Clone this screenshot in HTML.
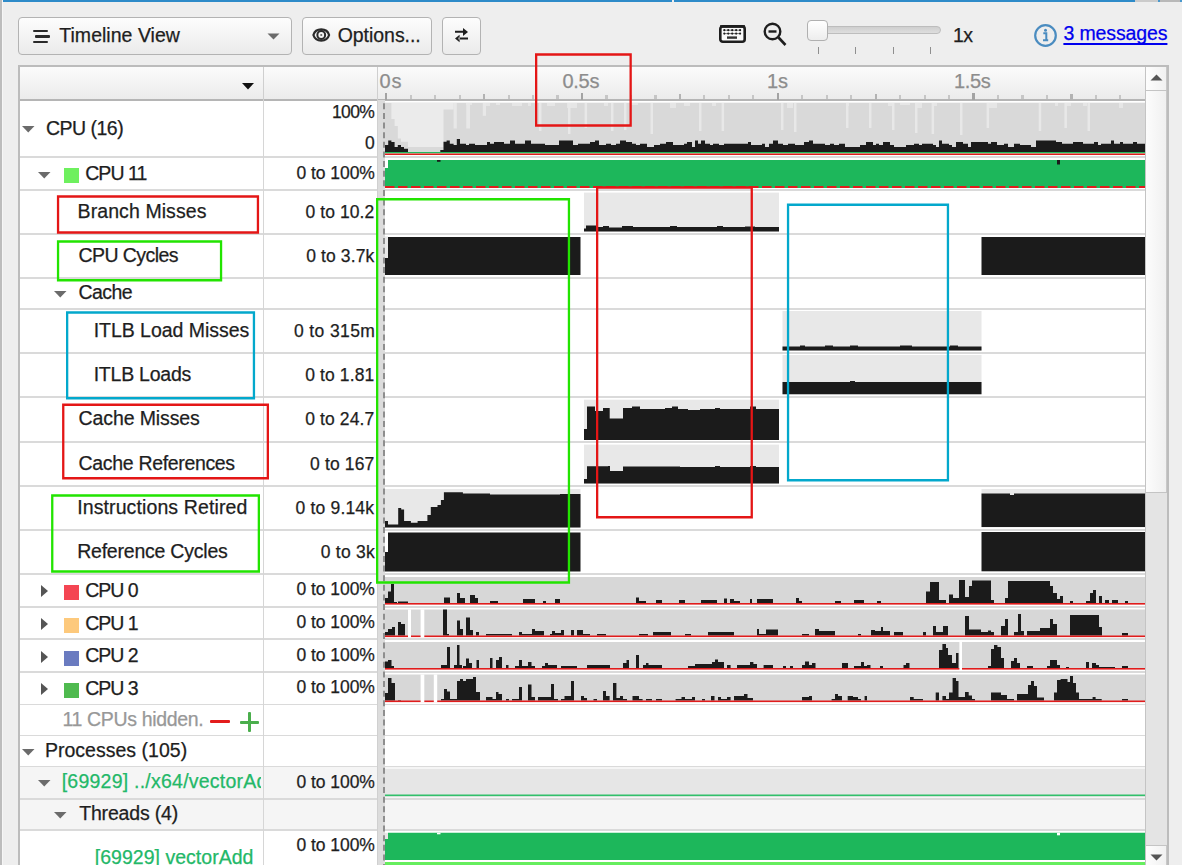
<!DOCTYPE html>
<html><head><meta charset="utf-8"><style>
html,body{margin:0;padding:0}
body{width:1182px;height:865px;overflow:hidden;position:relative;background:#eeeeee;font-family:"Liberation Sans", sans-serif}
body>div,body>span,body>svg{position:absolute}
.t{position:absolute;white-space:nowrap;font-family:"Liberation Sans", sans-serif;-webkit-text-stroke:0.25px currentColor}
svg{display:block;overflow:visible}
</style></head><body>
<div style="left:0px;top:0px;width:2px;height:865px;background:#bdbdbd;"></div>
<div style="left:2px;top:0px;width:1px;height:865px;background:#f6f6f6;"></div>
<div style="left:3px;top:0px;width:669px;height:2px;background:#2e8bc9;"></div>
<div style="left:674px;top:0px;width:461px;height:2px;background:#2e8bc9;"></div>
<div style="left:1135px;top:0px;width:23px;height:2px;background:#cbcbcb;"></div>
<div style="left:1158px;top:0px;width:2px;height:2px;background:#4a98cc;"></div>
<div style="left:1160px;top:0px;width:20px;height:2px;background:#b9b9b9;"></div>
<div style="left:1180px;top:0px;width:2px;height:2px;background:#4a98cc;"></div>
<div style="left:18px;top:17px;width:274px;height:38px;border:1px solid #b3b3b3;border-radius:4px;box-sizing:border-box;background:linear-gradient(#fdfdfd,#ebebeb);"></div>
<div style="left:302px;top:17px;width:130px;height:38px;border:1px solid #b3b3b3;border-radius:4px;box-sizing:border-box;background:linear-gradient(#fdfdfd,#ebebeb);"></div>
<div style="left:442px;top:17px;width:39px;height:38px;border:1px solid #b3b3b3;border-radius:4px;box-sizing:border-box;background:linear-gradient(#fdfdfd,#ebebeb);"></div>
<div style="left:33px;top:29.5px;width:14.5px;height:2.5px;background:#2a2a2a;border-radius:1px"></div>
<div style="left:35px;top:35px;width:14.5px;height:2.5px;background:#2a2a2a;border-radius:1px"></div>
<div style="left:33px;top:40.5px;width:14.5px;height:2.5px;background:#2a2a2a;border-radius:1px"></div>
<span class="t" style="left:59.30px;top:25.88px;font-size:19.5px;line-height:19.5px;color:#1e1e1e;letter-spacing:0.025px;">Timeline View</span>
<svg style="left:267px;top:32.8px" width="13" height="8"><path d="M0.5 0.5 L12.5 0.5 L6.5 6.5 Z" fill="#6b6b6b"/></svg>
<svg style="left:310px;top:25px" width="22" height="20" viewBox="0 0 22 20"><path d="M3.4 10 C5.6 2.6 16.9 2.6 19.1 10 C16.9 17.4 5.6 17.4 3.4 10 Z" fill="none" stroke="#2b2b2b" stroke-width="2.2"/><circle cx="11.25" cy="10" r="3.9" fill="none" stroke="#2b2b2b" stroke-width="2"/><circle cx="11.25" cy="10" r="1.1" fill="#666"/></svg>
<span class="t" style="left:337.70px;top:26.18px;font-size:19.5px;line-height:19.5px;color:#1e1e1e;letter-spacing:-0.044px;">Options...</span>
<svg style="left:0;top:0" width="1182" height="60" viewBox="0 0 1182 60"><path d="M455 30.8 H464 V32.8 H455 Z M463 28 L468 32 L463 36 Z M458.5 37.6 H468 V39.6 H458.5 Z M459.6 34.8 L455 38.6 L459.6 42.2 Z" fill="#1e1e1e"/></svg>
<svg style="left:718px;top:24px" width="29" height="20" viewBox="0 0 29 20"><rect x="2.3" y="2.4" width="24.4" height="15.3" rx="2.5" fill="#fafafa" stroke="#1e1e1e" stroke-width="2.6"/><rect x="2" y="1.2" width="25" height="2.5" fill="#1e1e1e"/><path d="M6 6.2 H22 M6 9.6 H22" stroke="#555" stroke-width="0.8"/><circle cx="6.30" cy="6.2" r="1.1" fill="#1e1e1e"/><circle cx="6.30" cy="9.6" r="1.1" fill="#1e1e1e"/><circle cx="10.25" cy="6.2" r="1.1" fill="#1e1e1e"/><circle cx="10.25" cy="9.6" r="1.1" fill="#1e1e1e"/><circle cx="14.20" cy="6.2" r="1.1" fill="#1e1e1e"/><circle cx="14.20" cy="9.6" r="1.1" fill="#1e1e1e"/><circle cx="18.15" cy="6.2" r="1.1" fill="#1e1e1e"/><circle cx="18.15" cy="9.6" r="1.1" fill="#1e1e1e"/><circle cx="22.10" cy="6.2" r="1.1" fill="#1e1e1e"/><circle cx="22.10" cy="9.6" r="1.1" fill="#1e1e1e"/><rect x="9" y="12.4" width="10" height="2.4" fill="#333"/></svg>
<svg style="left:760px;top:20px" width="30" height="30" viewBox="0 0 30 30"><circle cx="12.5" cy="11.5" r="7.8" fill="none" stroke="#1e1e1e" stroke-width="2.4"/><path d="M8.5 11.5 H16.5" stroke="#1e1e1e" stroke-width="2.4"/><path d="M18.5 17.5 L25.5 25" stroke="#1e1e1e" stroke-width="2.6"/></svg>
<div style="left:812px;top:26px;width:129px;height:8px;border:1px solid #bdbdbd;border-radius:4px;box-sizing:border-box;background:linear-gradient(#cfcfcf,#dedede)"></div>
<div style="left:807px;top:20px;width:21px;height:21px;border:1px solid #b0b0b0;border-radius:4px;box-sizing:border-box;background:linear-gradient(#ffffff,#ededed)"></div>
<div style="left:817.5px;top:47px;width:1px;height:7px;background:#8f8f8f;"></div>
<div style="left:855px;top:47px;width:1px;height:7px;background:#8f8f8f;"></div>
<div style="left:892.5px;top:47px;width:1px;height:7px;background:#8f8f8f;"></div>
<div style="left:930px;top:47px;width:1px;height:7px;background:#8f8f8f;"></div>
<span class="t" style="left:952.90px;top:25.68px;font-size:19.5px;line-height:19.5px;color:#1e1e1e;letter-spacing:-0.500px;">1x</span>
<svg style="left:1033px;top:23px" width="25" height="25" viewBox="0 0 25 25"><circle cx="12.5" cy="12.5" r="10.3" fill="none" stroke="#4a8cc0" stroke-width="2.2"/><circle cx="12.5" cy="7.3" r="1.5" fill="#4a8cc0"/><path d="M10.3 10.3 H13.3 V17 M10 17.3 H15.2" stroke="#4a8cc0" stroke-width="2" fill="none"/></svg>
<span class="t" style="left:1063.40px;top:23.98px;font-size:19.5px;line-height:19.5px;color:#0000ee;letter-spacing:-0.111px;text-decoration:underline;text-decoration-thickness:1.5px;text-underline-offset:2.5px;text-decoration-skip-ink:none;">3 messages</span>
<div style="left:18px;top:65px;width:1151px;height:820px;border:2px solid #bcbcbc;box-sizing:border-box;background:#fff"></div>
<div style="left:20px;top:67px;width:1125px;height:33px;background:linear-gradient(#fbfbfb,#ebebeb)"></div>
<div style="left:20px;top:99px;width:1125px;height:2px;background:#b5b5b5;"></div>
<div style="left:263px;top:67px;width:1px;height:33px;background:#cfcfcf;"></div>
<div style="left:377px;top:67px;width:1px;height:33px;background:#cfcfcf;"></div>
<svg style="left:242px;top:83px" width="12" height="7"><path d="M0 0 H12 L6 6.5 Z" fill="#111"/></svg>
<div style="left:20px;top:767px;width:1125px;height:63px;background:#f5f5f5;"></div>
<div style="left:20px;top:156.45px;width:1125px;height:1.5px;background:#dadada;"></div>
<div style="left:20px;top:189.15px;width:1125px;height:1.5px;background:#dadada;"></div>
<div style="left:20px;top:233.25px;width:1125px;height:1.5px;background:#dadada;"></div>
<div style="left:20px;top:277.05px;width:1125px;height:1.5px;background:#dadada;"></div>
<div style="left:20px;top:308.25px;width:1125px;height:1.5px;background:#dadada;"></div>
<div style="left:20px;top:352.05px;width:1125px;height:1.5px;background:#dadada;"></div>
<div style="left:20px;top:396.25px;width:1125px;height:1.5px;background:#dadada;"></div>
<div style="left:20px;top:441.05px;width:1125px;height:1.5px;background:#dadada;"></div>
<div style="left:20px;top:485.25px;width:1125px;height:1.5px;background:#dadada;"></div>
<div style="left:20px;top:529.05px;width:1125px;height:1.5px;background:#dadada;"></div>
<div style="left:20px;top:573.25px;width:1125px;height:1.5px;background:#dadada;"></div>
<div style="left:20px;top:606.15px;width:1125px;height:1.5px;background:#dadada;"></div>
<div style="left:20px;top:638.35px;width:1125px;height:1.5px;background:#dadada;"></div>
<div style="left:20px;top:671.15px;width:1125px;height:1.5px;background:#dadada;"></div>
<div style="left:20px;top:703.85px;width:1125px;height:1.5px;background:#dadada;"></div>
<div style="left:20px;top:734.85px;width:1125px;height:1.5px;background:#dadada;"></div>
<div style="left:20px;top:765.75px;width:1125px;height:1.5px;background:#dadada;"></div>
<div style="left:20px;top:798.15px;width:1125px;height:1.5px;background:#dadada;"></div>
<div style="left:20px;top:829.15px;width:1125px;height:1.5px;background:#dadada;"></div>
<div style="left:263px;top:100px;width:1px;height:765px;background:#d6d6d6;"></div>
<div style="left:377px;top:100px;width:1px;height:765px;background:#d0d0d0;"></div>
<div style="left:378px;top:100px;width:7px;height:765px;background:#dcdcdc;"></div>
<span class="t" style="left:379.40px;top:70.76px;font-size:20px;line-height:20px;color:#8d8d8d;letter-spacing:1.000px;">0s</span>
<span class="t" style="left:562.40px;top:70.76px;font-size:20px;line-height:20px;color:#8d8d8d;letter-spacing:-0.267px;">0.5s</span>
<span class="t" style="left:766.90px;top:70.76px;font-size:20px;line-height:20px;color:#8d8d8d;">1s</span>
<span class="t" style="left:953.90px;top:70.76px;font-size:20px;line-height:20px;color:#8d8d8d;letter-spacing:-0.333px;">1.5s</span>
<div style="left:385.2px;top:93px;width:2.2px;height:6.5px;background:#a3a3a3;"></div>
<div style="left:409.67px;top:95.2px;width:2.2px;height:4.3px;background:#c6c6c6;"></div>
<div style="left:434.14px;top:95.2px;width:2.2px;height:4.3px;background:#c6c6c6;"></div>
<div style="left:458.61px;top:95.2px;width:2.2px;height:4.3px;background:#c6c6c6;"></div>
<div style="left:483.08px;top:94px;width:2.2px;height:5.5px;background:#b3b3b3;"></div>
<div style="left:507.55px;top:95.2px;width:2.2px;height:4.3px;background:#c6c6c6;"></div>
<div style="left:532.02px;top:95.2px;width:2.2px;height:4.3px;background:#c6c6c6;"></div>
<div style="left:556.49px;top:95.2px;width:2.2px;height:4.3px;background:#c6c6c6;"></div>
<div style="left:580.96px;top:93px;width:2.2px;height:6.5px;background:#a3a3a3;"></div>
<div style="left:605.43px;top:95.2px;width:2.2px;height:4.3px;background:#c6c6c6;"></div>
<div style="left:629.9px;top:95.2px;width:2.2px;height:4.3px;background:#c6c6c6;"></div>
<div style="left:654.37px;top:95.2px;width:2.2px;height:4.3px;background:#c6c6c6;"></div>
<div style="left:678.84px;top:94px;width:2.2px;height:5.5px;background:#b3b3b3;"></div>
<div style="left:703.31px;top:95.2px;width:2.2px;height:4.3px;background:#c6c6c6;"></div>
<div style="left:727.78px;top:95.2px;width:2.2px;height:4.3px;background:#c6c6c6;"></div>
<div style="left:752.25px;top:95.2px;width:2.2px;height:4.3px;background:#c6c6c6;"></div>
<div style="left:776.72px;top:93px;width:2.2px;height:6.5px;background:#a3a3a3;"></div>
<div style="left:801.19px;top:95.2px;width:2.2px;height:4.3px;background:#c6c6c6;"></div>
<div style="left:825.66px;top:95.2px;width:2.2px;height:4.3px;background:#c6c6c6;"></div>
<div style="left:850.13px;top:95.2px;width:2.2px;height:4.3px;background:#c6c6c6;"></div>
<div style="left:874.6px;top:94px;width:2.2px;height:5.5px;background:#b3b3b3;"></div>
<div style="left:899.07px;top:95.2px;width:2.2px;height:4.3px;background:#c6c6c6;"></div>
<div style="left:923.54px;top:95.2px;width:2.2px;height:4.3px;background:#c6c6c6;"></div>
<div style="left:948.01px;top:95.2px;width:2.2px;height:4.3px;background:#c6c6c6;"></div>
<div style="left:972.48px;top:93px;width:2.2px;height:6.5px;background:#a3a3a3;"></div>
<div style="left:996.95px;top:95.2px;width:2.2px;height:4.3px;background:#c6c6c6;"></div>
<div style="left:1021.42px;top:95.2px;width:2.2px;height:4.3px;background:#c6c6c6;"></div>
<div style="left:1045.89px;top:95.2px;width:2.2px;height:4.3px;background:#c6c6c6;"></div>
<div style="left:1070.36px;top:94px;width:2.2px;height:5.5px;background:#b3b3b3;"></div>
<div style="left:1094.83px;top:95.2px;width:2.2px;height:4.3px;background:#c6c6c6;"></div>
<div style="left:1119.3px;top:95.2px;width:2.2px;height:4.3px;background:#c6c6c6;"></div>
<div style="left:1146px;top:67px;width:21px;height:800px;background:#e4e4e4;"></div>
<div style="left:1145px;top:67px;width:1px;height:800px;background:#c4c4c4;"></div>
<div style="left:1146px;top:67px;width:20px;height:23px;background:linear-gradient(90deg,#fdfdfd,#f1f1f1)"></div>
<div style="left:1166px;top:67px;width:1px;height:24px;background:#c8c8c8;"></div>
<div style="left:1146px;top:90px;width:21px;height:1px;background:#c4c4c4;"></div>
<svg style="left:1150px;top:73px" width="13" height="8"><path d="M0.5 7.5 H12.5 L6.5 1.5 Z" fill="#555"/></svg>
<div style="left:1146px;top:91px;width:20px;height:401px;background:linear-gradient(90deg,#fcfcfc,#f0f0f0)"></div>
<div style="left:1166px;top:91px;width:1px;height:401px;background:#c8c8c8;"></div>
<div style="left:1146px;top:492px;width:21px;height:1px;background:#c4c4c4;"></div>
<div style="left:1146px;top:845px;width:21px;height:1px;background:#c4c4c4;"></div>
<div style="left:1146px;top:846px;width:20px;height:19px;background:linear-gradient(90deg,#fdfdfd,#f1f1f1)"></div>
<div style="left:1166px;top:846px;width:1px;height:19px;background:#c8c8c8;"></div>
<svg style="left:1150px;top:854px" width="13" height="8"><path d="M0.5 0.5 H12.5 L6.5 6.5 Z" fill="#555"/></svg>
<svg style="left:22px;top:126px" width="13" height="7"><path d="M0 0 H12.5 L6.25 6.5 Z" fill="#6b6b6b"/></svg>
<span class="t" style="left:45.90px;top:119.18px;font-size:19.5px;line-height:19.5px;color:#1e1e1e;letter-spacing:-0.500px;">CPU (16)</span>
<svg style="left:38px;top:172px" width="13" height="7"><path d="M0 0 H12.5 L6.25 6.5 Z" fill="#6b6b6b"/></svg>
<div style="left:64px;top:168px;width:15px;height:15px;background:#6ef05e;"></div>
<span class="t" style="left:85.20px;top:164.08px;font-size:19.5px;line-height:19.5px;color:#1e1e1e;letter-spacing:-0.920px;">CPU 11</span>
<span class="t" style="left:77.60px;top:201.78px;font-size:19.5px;line-height:19.5px;color:#1e1e1e;letter-spacing:0.083px;">Branch Misses</span>
<span class="t" style="left:78.60px;top:245.78px;font-size:19.5px;line-height:19.5px;color:#1e1e1e;letter-spacing:-0.578px;">CPU Cycles</span>
<svg style="left:54px;top:291px" width="13" height="7"><path d="M0 0 H12.5 L6.25 6.5 Z" fill="#6b6b6b"/></svg>
<span class="t" style="left:78.60px;top:283.18px;font-size:19.5px;line-height:19.5px;color:#1e1e1e;letter-spacing:-0.575px;">Cache</span>
<span class="t" style="left:93.70px;top:320.78px;font-size:19.5px;line-height:19.5px;color:#1e1e1e;letter-spacing:-0.033px;">ITLB Load Misses</span>
<span class="t" style="left:93.70px;top:364.78px;font-size:19.5px;line-height:19.5px;color:#1e1e1e;letter-spacing:-0.233px;">ITLB Loads</span>
<span class="t" style="left:78.60px;top:408.78px;font-size:19.5px;line-height:19.5px;color:#1e1e1e;letter-spacing:-0.109px;">Cache Misses</span>
<span class="t" style="left:78.60px;top:453.88px;font-size:19.5px;line-height:19.5px;color:#1e1e1e;letter-spacing:-0.333px;">Cache References</span>
<span class="t" style="left:77.20px;top:498.08px;font-size:19.5px;line-height:19.5px;color:#1e1e1e;letter-spacing:0.111px;">Instructions Retired</span>
<span class="t" style="left:77.20px;top:541.58px;font-size:19.5px;line-height:19.5px;color:#1e1e1e;letter-spacing:-0.220px;">Reference Cycles</span>
<svg style="left:41px;top:585px" width="8" height="13"><path d="M0 0 V12 L7 6 Z" fill="#555"/></svg>
<div style="left:64px;top:585px;width:15px;height:15px;background:#f44553;"></div>
<span class="t" style="left:85.20px;top:581.48px;font-size:19.5px;line-height:19.5px;color:#1e1e1e;letter-spacing:-1.025px;">CPU 0</span>
<svg style="left:41px;top:618px" width="8" height="13"><path d="M0 0 V12 L7 6 Z" fill="#555"/></svg>
<div style="left:64px;top:618px;width:15px;height:15px;background:#fdc97c;"></div>
<span class="t" style="left:85.20px;top:613.58px;font-size:19.5px;line-height:19.5px;color:#1e1e1e;letter-spacing:-1.025px;">CPU 1</span>
<svg style="left:41px;top:651px" width="8" height="13"><path d="M0 0 V12 L7 6 Z" fill="#555"/></svg>
<div style="left:64px;top:651px;width:15px;height:15px;background:#6a7bc0;"></div>
<span class="t" style="left:85.20px;top:646.08px;font-size:19.5px;line-height:19.5px;color:#1e1e1e;letter-spacing:-1.025px;">CPU 2</span>
<svg style="left:41px;top:683px" width="8" height="13"><path d="M0 0 V12 L7 6 Z" fill="#555"/></svg>
<div style="left:64px;top:683px;width:15px;height:15px;background:#4fba4f;"></div>
<span class="t" style="left:85.20px;top:678.58px;font-size:19.5px;line-height:19.5px;color:#1e1e1e;letter-spacing:-1.025px;">CPU 3</span>
<span class="t" style="left:62.40px;top:709.78px;font-size:19.5px;line-height:19.5px;color:#989898;letter-spacing:-0.343px;">11 CPUs hidden.</span>
<div style="left:210px;top:720.4px;width:19.8px;height:3px;background:#e31d1d;border-radius:1px"></div>
<div style="left:239.5px;top:720.5px;width:19.6px;height:3px;background:#4aae4c;border-radius:1px"></div>
<div style="left:248.1px;top:712px;width:3px;height:20px;background:#4aae4c;border-radius:1px"></div>
<svg style="left:22px;top:749px" width="13" height="7"><path d="M0 0 H12.5 L6.25 6.5 Z" fill="#6b6b6b"/></svg>
<span class="t" style="left:44.90px;top:740.98px;font-size:19.5px;line-height:19.5px;color:#1e1e1e;letter-spacing:0.021px;">Processes (105)</span>
<svg style="left:38px;top:780px" width="13" height="7"><path d="M0 0 H12.5 L6.25 6.5 Z" fill="#6b6b6b"/></svg>
<div style="left:62px;top:767px;width:198.5px;height:32px;overflow:hidden"><span class="t" style="left:-0.30px;top:5.28px;font-size:19.5px;line-height:19.5px;color:#23b868;letter-spacing:0.233px">[69929] ../x64/vectorAdd</span></div>
<svg style="left:54px;top:812px" width="13" height="7"><path d="M0 0 H12.5 L6.25 6.5 Z" fill="#6b6b6b"/></svg>
<span class="t" style="left:79.20px;top:803.88px;font-size:19.5px;line-height:19.5px;color:#1e1e1e;letter-spacing:-0.180px;">Threads (4)</span>
<span class="t" style="left:94.70px;top:847.58px;font-size:19.5px;line-height:19.5px;color:#23b868;letter-spacing:0.031px;">[69929] vectorAdd</span>
<span class="t" style="left:332.00px;top:104.31px;font-size:17.5px;line-height:17.5px;color:#1e1e1e;letter-spacing:-0.633px;">100%</span>
<span class="t" style="left:364.90px;top:135.17px;font-size:17.5px;line-height:17.5px;color:#1e1e1e;letter-spacing:0.200px;">0</span>
<span class="t" style="left:296.60px;top:165.26px;font-size:17.5px;line-height:17.5px;color:#1e1e1e;letter-spacing:-0.062px;">0 to 100%</span>
<span class="t" style="left:305.60px;top:204.37px;font-size:17.5px;line-height:17.5px;color:#1e1e1e;letter-spacing:0.063px;">0 to 10.2</span>
<span class="t" style="left:306.30px;top:247.96px;font-size:17.5px;line-height:17.5px;color:#1e1e1e;letter-spacing:0.100px;">0 to 3.7k</span>
<span class="t" style="left:294.00px;top:322.76px;font-size:17.5px;line-height:17.5px;color:#1e1e1e;letter-spacing:0.388px;">0 to 315m</span>
<span class="t" style="left:305.30px;top:366.96px;font-size:17.5px;line-height:17.5px;color:#1e1e1e;letter-spacing:0.100px;">0 to 1.81</span>
<span class="t" style="left:305.30px;top:410.96px;font-size:17.5px;line-height:17.5px;color:#1e1e1e;letter-spacing:0.100px;">0 to 24.7</span>
<span class="t" style="left:310.10px;top:456.37px;font-size:17.5px;line-height:17.5px;color:#1e1e1e;letter-spacing:0.143px;">0 to 167</span>
<span class="t" style="left:295.60px;top:500.16px;font-size:17.5px;line-height:17.5px;color:#1e1e1e;letter-spacing:0.167px;">0 to 9.14k</span>
<span class="t" style="left:320.80px;top:543.87px;font-size:17.5px;line-height:17.5px;color:#1e1e1e;letter-spacing:0.217px;">0 to 3k</span>
<span class="t" style="left:296.60px;top:581.47px;font-size:17.5px;line-height:17.5px;color:#1e1e1e;letter-spacing:-0.062px;">0 to 100%</span>
<span class="t" style="left:296.60px;top:614.31px;font-size:17.5px;line-height:17.5px;color:#1e1e1e;letter-spacing:-0.062px;">0 to 100%</span>
<span class="t" style="left:296.60px;top:647.16px;font-size:17.5px;line-height:17.5px;color:#1e1e1e;letter-spacing:-0.062px;">0 to 100%</span>
<span class="t" style="left:296.60px;top:679.47px;font-size:17.5px;line-height:17.5px;color:#1e1e1e;letter-spacing:-0.062px;">0 to 100%</span>
<span class="t" style="left:296.60px;top:774.26px;font-size:17.5px;line-height:17.5px;color:#1e1e1e;letter-spacing:-0.062px;">0 to 100%</span>
<span class="t" style="left:296.60px;top:837.47px;font-size:17.5px;line-height:17.5px;color:#1e1e1e;letter-spacing:-0.062px;">0 to 100%</span>
<svg style="left:0;top:0;position:absolute" width="1182" height="865" viewBox="0 0 1182 865"><path d="M384 101 V865" stroke="#8a8a8a" stroke-width="1.9" stroke-dasharray="6 3.63" stroke-dashoffset="7.33"/><rect x="385" y="102.4" width="760" height="50" fill="#ebebeb"/><path d="M385 152 V103 H391.4 V119 H394.6 V126 H397.8 V138.6 H401 V141.8 H408 V147 H443.5 V109.4 H453.6 V103 H1145 V152 Z" fill="#d9d9d9"/><rect x="466" y="103" width="6" height="2" fill="#e6e6e6"/><rect x="484" y="103" width="6" height="3" fill="#e6e6e6"/><rect x="496" y="103" width="4" height="2" fill="#e6e6e6"/><rect x="512" y="103" width="10" height="3" fill="#e6e6e6"/><rect x="528" y="103" width="3" height="3" fill="#e6e6e6"/><rect x="547" y="103" width="8" height="3" fill="#e6e6e6"/><rect x="567" y="103" width="10" height="5" fill="#e6e6e6"/><rect x="604" y="103" width="4" height="3" fill="#e6e6e6"/><rect x="630" y="103" width="8" height="2" fill="#e6e6e6"/><rect x="670" y="103" width="6" height="5" fill="#e6e6e6"/><rect x="684" y="103" width="6" height="3" fill="#e6e6e6"/><rect x="712" y="103" width="4" height="3" fill="#e6e6e6"/><rect x="787" y="103" width="6" height="5" fill="#e6e6e6"/><rect x="846" y="103" width="3" height="3" fill="#e6e6e6"/><rect x="888" y="103" width="6" height="3" fill="#e6e6e6"/><rect x="900" y="103" width="10" height="2" fill="#e6e6e6"/><rect x="916" y="103" width="6" height="5" fill="#e6e6e6"/><rect x="934" y="103" width="3" height="3" fill="#e6e6e6"/><rect x="989" y="103" width="8" height="5" fill="#e6e6e6"/><rect x="1055" y="103" width="3" height="3" fill="#e6e6e6"/><rect x="1066" y="103" width="5" height="3" fill="#e6e6e6"/><rect x="1083" y="103" width="4" height="3" fill="#e6e6e6"/><rect x="1119" y="103" width="4" height="5" fill="#e6e6e6"/><rect x="453.6" y="103" width="3.2" height="25.5" fill="#e8e8e8"/><rect x="466.3" y="103" width="3.7" height="25.5" fill="#e8e8e8"/><rect x="482.8" y="103" width="3.2" height="12.799999999999997" fill="#e8e8e8"/><rect x="539" y="103" width="2.5" height="28" fill="#e8e8e8"/><rect x="568" y="103" width="2.5" height="31" fill="#e8e8e8"/><rect x="584.6" y="103" width="2.5" height="25" fill="#e8e8e8"/><rect x="611" y="103" width="2.5" height="28" fill="#e8e8e8"/><rect x="624" y="103" width="2.5" height="27" fill="#e8e8e8"/><rect x="650.5" y="103" width="2.5" height="31" fill="#e8e8e8"/><rect x="699" y="103" width="2.5" height="28" fill="#e8e8e8"/><rect x="721.6" y="103" width="2.5" height="28" fill="#e8e8e8"/><rect x="781" y="103" width="2.5" height="27" fill="#e8e8e8"/><rect x="794" y="103" width="2.5" height="29" fill="#e8e8e8"/><rect x="846" y="103" width="2.5" height="25" fill="#e8e8e8"/><rect x="869" y="103" width="2.5" height="25" fill="#e8e8e8"/><rect x="892" y="103" width="2.5" height="27" fill="#e8e8e8"/><rect x="915" y="103" width="2.5" height="30" fill="#e8e8e8"/><rect x="931.6" y="103" width="2.5" height="31" fill="#e8e8e8"/><rect x="960" y="103" width="2.5" height="32" fill="#e8e8e8"/><rect x="986.6" y="103" width="2.5" height="25" fill="#e8e8e8"/><rect x="1038.7" y="103" width="2.5" height="28" fill="#e8e8e8"/><rect x="1064.4" y="103" width="2.5" height="25" fill="#e8e8e8"/><rect x="1087.5" y="103" width="2.5" height="28" fill="#e8e8e8"/><path d="M385 152 V145 H388.2 V140.5 H391.4 V142 H394.6 V146.9 H397.8 V145 H401 V147 H404 V148.8 H408 V152 Z M440.3 152 V150 H443.5 V141.8 H446.6 V140.5 H449.8 V143.7 H453.6 V145 H456.8 V138.9 H460 V143.7 H466 V145 H469 V143.7 H475 V145 H479 V145 H484 V145 H487 V142 H490 V143.7 H494 V142 H497 V142 H504 V143.7 H510 V140.5 H515 V143.7 H522 V143.7 H525 V140.5 H531 V143.7 H538 V143.7 H545 V145 H548 V145 H551 V145 H554 V145 H559 V140.5 H566 V140.5 H573 V145 H578 V143.7 H583 V143.7 H587 V143.7 H590 V142 H595 V140.5 H599 V145 H606 V143.7 H611 V145 H616 V143.7 H620 V140.5 H626 V142 H632 V143.7 H636 V145 H640 V143.7 H647 V146.9 H654 V145 H660 V143.7 H666 V142 H673 V145 H680 V145 H684 V143.7 H687 V142 H692 V146.9 H695 V140.5 H698 V143.7 H701 V140.5 H705 V143.7 H710 V145 H713 V143.7 H719 V145 H724 V143.7 H728 V143.7 H732 V143.7 H735 V143.7 H739 V143.7 H742 V143.7 H748 V142 H751 V145 H756 V145 H762 V143.7 H765 V146.9 H769 V143.7 H773 V140.5 H778 V143.7 H783 V145 H788 V143.7 H795 V145 H798 V145 H804 V142 H809 V140.5 H813 V143.7 H817 V143.7 H821 V143.7 H825 V145 H830 V143.7 H834 V145 H839 V143.7 H845 V146.9 H848 V146.9 H853 V146.9 H860 V145 H866 V142 H873 V145 H876 V143.7 H879 V145 H883 V142 H890 V145 H894 V146.9 H900 V146.9 H903 V146.9 H906 V145 H910 V145 H914 V143.7 H919 V145 H922 V143.7 H929 V143.7 H933 V145 H936 V146.9 H939 V140.5 H942 V143.7 H949 V145 H952 V146.9 H956 V142 H963 V143.7 H968 V146.9 H971 V142 H978 V142 H984 V142 H988 V143.7 H991 V142 H997 V145 H1001 V145 H1004 V143.7 H1008 V146.9 H1014 V143.7 H1020 V145 H1025 V145 H1031 V146.9 H1036 V140.5 H1043 V140.5 H1047 V140.5 H1053 V140.5 H1056 V142 H1059 V142 H1062 V143.7 H1068 V143.7 H1073 V142 H1080 V142 H1083 V143.7 H1090 V143.7 H1094 V142 H1098 V145 H1101 V143.7 H1105 V143.7 H1108 V143.7 H1111 V140.5 H1114 V143.7 H1120 V142 H1123 V143.7 H1130 V143.7 H1133 V142 H1137 V143.7 H1144 V143.7 H1145 V152 Z" fill="#1b1b1b"/><rect x="385" y="152" width="760" height="1.3" fill="#21b85e"/><rect x="385" y="153.5" width="760" height="1.5" fill="#e01c1c"/><path d="M385 188 V168 H388 V160 H1145 V188 Z" fill="#1db75b"/><path d="M385 187 H1145" stroke="#e01c1c" stroke-width="2" stroke-dasharray="9.5 3.5" stroke-dashoffset="0"/><rect x="437" y="160" width="3.5" height="1.8" fill="#1b1b1b"/><rect x="1057" y="160" width="3" height="4.5" fill="#1b1b1b"/><rect x="584" y="192.6" width="195" height="38.6" fill="#e8e8e8"/><path d="M584 231.5 V228.5 H586 V225.5 H597 V227 H603 V226 H609 V227.5 H622 V226 H633 V227 H670 V226 H677 V227 H717 V226 H723 V227 H745 V226.5 H755 V227 H779 V231.5 Z" fill="#1b1b1b"/><rect x="385" y="236.5" width="3" height="22" fill="#e8e8e8"/><path d="M385 275 V258 H388 V237 H580.5 V275 Z" fill="#1b1b1b"/><rect x="981.5" y="237" width="163.5" height="38" fill="#1b1b1b"/><rect x="782.5" y="311" width="199" height="39.6" fill="#e8e8e8"/><path d="M782.5 350.6 V346.5 H800 V345.5 H805 V346.5 H825 V345.5 H833 V346.5 H850 V345.5 H858 V346.5 H900 V345.5 H912 V346.5 H950 V345.5 H958 V346.5 H981.5 V350.6 Z" fill="#1b1b1b"/><rect x="782.5" y="355" width="199" height="39.3" fill="#e8e8e8"/><path d="M782.5 394.3 V382 H850 V381 H855 V382 H981.5 V394.3 Z" fill="#1b1b1b"/><rect x="584" y="399.7" width="195" height="40.3" fill="#e8e8e8"/><path d="M584 440 V429 H587 V406.5 H595 V411 H603 V408 H609.7 V418.6 H623 V408 H632 V406.5 H640 V409 H665 V408 H672 V406.5 H678 V409 H688 V410 H700 V409 H715 V408 H720 V409 H750 V406.5 H756 V409 H779 V440 Z" fill="#1b1b1b"/><rect x="584" y="444.6" width="195" height="39" fill="#e8e8e8"/><path d="M584 483.6 V479 H587 V466.3 H608 V466 H610 V471 H623 V466.5 H680 V467 H715 V466 H720 V467 H750 V466 H756 V467 H779 V483.6 Z" fill="#1b1b1b"/><rect x="385" y="489" width="195.5" height="38.7" fill="#e8e8e8"/><path d="M385 527.4 V521 H388 V524.4 H398.2 V507.9 H401.2 V509.6 H404.1 V521 H410.9 V522.7 H417.6 V521 H427.4 V515.1 H430.8 V507 H437.5 V505 H440.9 V499.9 H443.9 V492.3 H462.9 V493.5 H490 V494.5 H560 V494 H580.5 V527.4 Z" fill="#1b1b1b"/><rect x="981.5" y="489" width="163.5" height="38.5" fill="#e8e8e8"/><path d="M981.5 527 V493.5 H1010 V495 H1014 V493.5 H1145 V527 Z" fill="#1b1b1b"/><path d="M385 571.4 V552 H388 V532.5 H580.5 V571.4 Z" fill="#1b1b1b"/><rect x="981.5" y="532" width="163.5" height="39.3" fill="#1b1b1b"/><rect x="385" y="577" width="760" height="26.5" fill="#d7d7d7"/><path d="M385 603V598H388V603ZM388 603V591.5H391V603ZM391 603V584H394V603ZM394 603V602H397V603ZM398 603V601.5H408V603ZM444 603V597.5H450V603ZM457 603V593H460V603ZM460 603V598H465V603ZM470 603V595H475V603ZM475 603V598H478V603ZM490 603V601H498V603ZM523 603V599H535V603ZM543 603V601H546V603ZM555 603V599H560V603ZM636 603V597.5H639V603ZM639 603V601H646V603ZM656 603V600H662V603ZM679 603V600H685V603ZM701 603V600H717V603ZM724 603V598.5H727V603ZM730 603V599H734V603ZM734 603V601H740V603ZM750 603V599H752V603ZM757 603V599H773V603ZM796 603V598H799V603ZM799 603V601H802V603ZM835 603V601H841V603ZM854 603V600H864V603ZM877 603V601H881V603ZM926 603V591.5H930V603ZM930 603V582H939V603ZM939 603V600H946V603ZM949 603V594.5H953V603ZM953 603V598H959V603ZM959 603V580H965V603ZM965 603V597H969V603ZM969 603V586H972V603ZM972 603V580.5H991V603ZM991 603V600H994V603ZM1005 603V598H1008V603ZM1008 603V581H1050V603ZM1050 603V586H1053V603ZM1053 603V593H1057V603ZM1057 603V599H1060V603ZM1060 603V596H1063V603ZM1070 603V601H1073V603ZM1086 603V601H1090V603ZM1090 603V593H1093V603ZM1093 603V590H1096V603ZM1099 603V596H1102V603ZM1105 603V600H1109V603ZM1112 603V600H1118V603ZM1125 603V601H1128V603Z" fill="#1b1b1b"/><rect x="385" y="603" width="760" height="1.6" fill="#e01c1c"/><rect x="385" y="609.5" width="760" height="26.5" fill="#d7d7d7"/><path d="M385 635.5V632H388V635.5ZM388 635.5V629H392V635.5ZM392 635.5V627H395V635.5ZM398 635.5V622H401V635.5ZM401 635.5V624H405V635.5ZM443 635.5V609.5H447V635.5ZM447 635.5V634H449V635.5ZM457 635.5V620.5H460V635.5ZM460 635.5V629H463V635.5ZM466 635.5V617.5H470V635.5ZM470 635.5V630H473V635.5ZM476 635.5V632H479V635.5ZM486 635.5V634H512V635.5ZM519 635.5V632H522V635.5ZM522 635.5V634H532V635.5ZM532 635.5V629H535V635.5ZM535 635.5V631H544V635.5ZM550 635.5V634H555V635.5ZM552 635.5V631H555V635.5ZM555 635.5V633H561V635.5ZM561 635.5V630H564V635.5ZM571 635.5V630H574V635.5ZM577 635.5V630H583V635.5ZM583 635.5V634H590V635.5ZM597 635.5V634H606V635.5ZM639 635.5V634H648V635.5ZM653 635.5V632H671V635.5ZM685 635.5V634H691V635.5ZM708 635.5V632H734V635.5ZM757 635.5V629H759V635.5ZM759 635.5V634H766V635.5ZM766 635.5V629.5H778V635.5ZM802 635.5V634H809V635.5ZM815 635.5V629H819V635.5ZM819 635.5V631H835V635.5ZM858 635.5V634H861V635.5ZM871 635.5V630H875V635.5ZM875 635.5V631H881V635.5ZM881 635.5V627H883V635.5ZM883 635.5V631H890V635.5ZM894 635.5V632H903V635.5ZM923 635.5V632H926V635.5ZM933 635.5V626H936V635.5ZM936 635.5V632H943V635.5ZM943 635.5V626H948V635.5ZM965 635.5V616H969V635.5ZM969 635.5V629.5H981V635.5ZM981 635.5V632H994V635.5ZM988 635.5V630.5H991V635.5ZM1001 635.5V626H1005V635.5ZM1005 635.5V619H1008V635.5ZM1014 635.5V632H1018V635.5ZM1018 635.5V614H1021V635.5ZM1021 635.5V631H1024V635.5ZM1027 635.5V631H1040V635.5ZM1040 635.5V628H1050V635.5ZM1050 635.5V619H1053V635.5ZM1053 635.5V624H1057V635.5ZM1070 635.5V615H1099V635.5ZM1099 635.5V627H1102V635.5ZM1122 635.5V633H1128V635.5Z" fill="#1b1b1b"/><rect x="385" y="635.5" width="760" height="1.6" fill="#e01c1c"/><rect x="408" y="609.5" width="3" height="28.0" fill="#fff"/><rect x="420.6" y="609.5" width="3.6999999999999886" height="28.0" fill="#fff"/><rect x="385" y="642" width="760" height="26.5" fill="#d7d7d7"/><path d="M385 668V661.5H388V668ZM388 668V660H391.5V668ZM391.5 668V666H394V668ZM441 668V665H447V668ZM447 668V647H450V668ZM454 668V665H457V668ZM457 668V645H459.5V668ZM459.5 668V665H462V668ZM463 668V666H466V668ZM466 668V658.5H469V668ZM469 668V663H472V668ZM476.5 668V660H479V668ZM490 668V658H492.5V668ZM496 668V660H499V668ZM499 668V657H502V668ZM506 668V665H508.5V668ZM515 668V666H519V668ZM519 668V660H522V668ZM522 668V666H528V668ZM528 668V662H531.5V668ZM531.5 668V666H535V668ZM542 668V666H545V668ZM545 668V663H548V668ZM548 668V665H557V668ZM561 668V666H577V668ZM587 668V665H610V668ZM623 668V663H626.5V668ZM626.5 668V660H629V668ZM636 668V655H639V668ZM643 668V665H646V668ZM646 668V663H648.5V668ZM648.5 668V665H662V668ZM688 668V666H695V668ZM695 668V664H712V668ZM712 668V662H715V668ZM715 668V659.5H718V668ZM718 668V662H724V668ZM727 668V665H730.6V668ZM737 668V665H750V668ZM750 668V662H753.4V668ZM753.4 668V664H757V668ZM763.6 668V665H773V668ZM783 668V666H786V668ZM790 668V666H793V668ZM802 668V665H805V668ZM805 668V661.5H809V668ZM809 668V665H812V668ZM812 668V663H815.5V668ZM842 668V663H848V668ZM854 668V666H861V668ZM861 668V662H864V668ZM864 668V666H867V668ZM867 668V665H870.5V668ZM880 668V666H883V668ZM903.5 668V665H906V668ZM906 668V663H909.5V668ZM939 668V650H942.4V668ZM942.4 668V644H946V668ZM946 668V648H948V668ZM948 668V655H952V668ZM952 668V663H956V668ZM956 668V653H958.5V668ZM988 668V666H991V668ZM991 668V649H994V668ZM994 668V645H997.4V668ZM997.4 668V647H1001V668ZM1001 668V658H1004V668ZM1011 668V661H1014V668ZM1014 668V658H1017V668ZM1017 668V663H1020V668ZM1027 668V666H1033V668ZM1047 668V666H1050V668ZM1050 668V660H1057V668ZM1057 668V665H1060V668ZM1066 668V667H1069V668ZM1086 668V662H1089V668ZM1092 668V663H1096V668ZM1096 668V665H1099V668ZM1099 668V667H1115V668ZM1122 668V666H1128V668Z" fill="#1b1b1b"/><rect x="385" y="668" width="760" height="1.6" fill="#e01c1c"/><rect x="959.4" y="642" width="2.6000000000000227" height="28" fill="#fff"/><rect x="385" y="674.5" width="760" height="26.5" fill="#d7d7d7"/><path d="M385 700.5V693H388V700.5ZM388 700.5V678H391.5V700.5ZM391.5 700.5V683H395V700.5ZM398 700.5V701H401V700.5ZM441 700.5V699H444V700.5ZM444 700.5V689H447V700.5ZM447 700.5V691.5H450V700.5ZM450 700.5V699H457V700.5ZM457 700.5V681H460V700.5ZM460 700.5V679H463V700.5ZM463 700.5V681H466V700.5ZM466 700.5V679H473V700.5ZM473 700.5V677H476V700.5ZM476 700.5V692H480V700.5ZM486 700.5V697H492.5V700.5ZM492.5 700.5V699H496V700.5ZM496 700.5V692H498.5V700.5ZM498.5 700.5V694H502V700.5ZM506 700.5V699H509V700.5ZM512 700.5V699H519V700.5ZM519 700.5V687H522V700.5ZM528 700.5V684.5H531.5V700.5ZM531.5 700.5V697H535V700.5ZM538 700.5V697H552V700.5ZM551 700.5V684H554V700.5ZM554 700.5V699H558V700.5ZM561 700.5V699H564.5V700.5ZM564.5 700.5V696H571V700.5ZM571 700.5V681H574V700.5ZM581 700.5V696H584V700.5ZM584 700.5V698H587V700.5ZM593.5 700.5V699H597V700.5ZM603 700.5V691H606V700.5ZM606 700.5V696H609.6V700.5ZM613 700.5V683H616.4V700.5ZM616.4 700.5V698H620V700.5ZM620 700.5V696H623V700.5ZM623 700.5V699H627V700.5ZM632.5 700.5V696H639V700.5ZM639 700.5V699H642.6V700.5ZM646 700.5V699H652V700.5ZM656 700.5V699H662V700.5ZM675.6 700.5V699H681.5V700.5ZM681.5 700.5V697H685V700.5ZM685 700.5V699H692V700.5ZM692 700.5V697H695V700.5ZM702 700.5V699H705V700.5ZM711 700.5V696H714.5V700.5ZM718 700.5V697H721V700.5ZM721 700.5V699H727V700.5ZM727 700.5V697H730.6V700.5ZM734 700.5V696H744V700.5ZM744 700.5V694H747.5V700.5ZM747.5 700.5V698H753V700.5ZM802 700.5V697H809V700.5ZM809 700.5V696H812V700.5ZM831.6 700.5V699H835V700.5ZM835 700.5V694H838V700.5ZM838 700.5V696H842V700.5ZM847.7 700.5V696H853V700.5ZM853 700.5V697H858V700.5ZM858 700.5V699H861V700.5ZM864.6 700.5V696H867V700.5ZM910 700.5V697H913.7V700.5ZM913.7 700.5V699H923V700.5ZM935.7 700.5V692.5H939V700.5ZM942.4 700.5V696H946V700.5ZM946 700.5V699H949V700.5ZM949 700.5V692.5H952.6V700.5ZM952.6 700.5V678H956V700.5ZM956 700.5V681H958.5V700.5ZM958.5 700.5V697H965V700.5ZM965 700.5V692H968.7V700.5ZM968.7 700.5V695.5H972V700.5ZM972 700.5V699H975V700.5ZM991 700.5V692.5H1001V700.5ZM1001 700.5V695H1007V700.5ZM1007 700.5V699H1014V700.5ZM1017 700.5V694H1028V700.5ZM1028 700.5V685H1031V700.5ZM1031 700.5V681H1034V700.5ZM1034 700.5V686H1037V700.5ZM1037 700.5V697.5H1044V700.5ZM1054 700.5V692.5H1057V700.5ZM1057 700.5V680H1060.6V700.5ZM1060.6 700.5V679H1067.5V700.5ZM1067.5 700.5V682H1070V700.5ZM1070 700.5V676H1073V700.5ZM1073 700.5V683H1076V700.5ZM1076 700.5V692.5H1079V700.5ZM1079 700.5V699H1092.6V700.5ZM1092.6 700.5V697H1095.6V700.5ZM1095.6 700.5V699H1101.7V700.5ZM1122 700.5V699H1128V700.5Z" fill="#1b1b1b"/><rect x="385" y="700.5" width="760" height="1.6" fill="#e01c1c"/><rect x="420.6" y="674.5" width="3.6999999999999886" height="28.0" fill="#fff"/><rect x="433.8" y="674.5" width="3.3999999999999773" height="28.0" fill="#fff"/><rect x="385" y="769" width="760" height="28" fill="#e6e6e6"/><rect x="385" y="794.5" width="760" height="1.6" fill="#31bf6a"/><rect x="385" y="832.8" width="3" height="6.2" fill="#e6e6e6"/><path d="M385 860 V839 H388 V832.8 H1145 V860 Z" fill="#1db75b"/><rect x="385" y="862" width="760" height="4" fill="#66ee5e"/><rect x="437" y="832.8" width="3.5" height="1.5" fill="#ffffff"/><rect x="1057" y="832.8" width="3" height="2.5" fill="#ffffff"/></svg>
<svg style="left:0;top:0" width="1182" height="865" viewBox="0 0 1182 865"><path d="M535.00 53.30H631.80V126.80H535.00Z M537.30 55.80V124.30H629.50V55.80Z" fill="#e41616" fill-rule="evenodd"/><path d="M56.90 195.20H259.10V233.70H56.90Z M59.20 197.70V231.20H256.80V197.70Z" fill="#e41616" fill-rule="evenodd"/><path d="M56.90 240.30H222.20V281.60H56.90Z M59.20 242.80V279.10H219.90V242.80Z" fill="#22e400" fill-rule="evenodd"/><path d="M66.00 311.30H255.10V399.60H66.00Z M68.30 313.80V397.10H252.80V313.80Z" fill="#03a8cc" fill-rule="evenodd"/><path d="M62.10 403.40H269.00V479.60H62.10Z M64.40 405.90V477.10H266.70V405.90Z" fill="#e41616" fill-rule="evenodd"/><path d="M51.10 494.30H260.00V572.70H51.10Z M53.40 496.80V570.20H257.70V496.80Z" fill="#22e400" fill-rule="evenodd"/><path d="M376.00 198.10H570.10V583.80H376.00Z M378.30 200.60V581.30H567.80V200.60Z" fill="#22e400" fill-rule="evenodd"/><path d="M596.00 186.30H752.90V518.60H596.00Z M598.30 188.80V516.10H750.60V188.80Z" fill="#e41616" fill-rule="evenodd"/><path d="M786.90 203.45H949.10V481.60H786.90Z M789.20 205.95V479.10H946.80V205.95Z" fill="#03a8cc" fill-rule="evenodd"/></svg>
</body></html>
